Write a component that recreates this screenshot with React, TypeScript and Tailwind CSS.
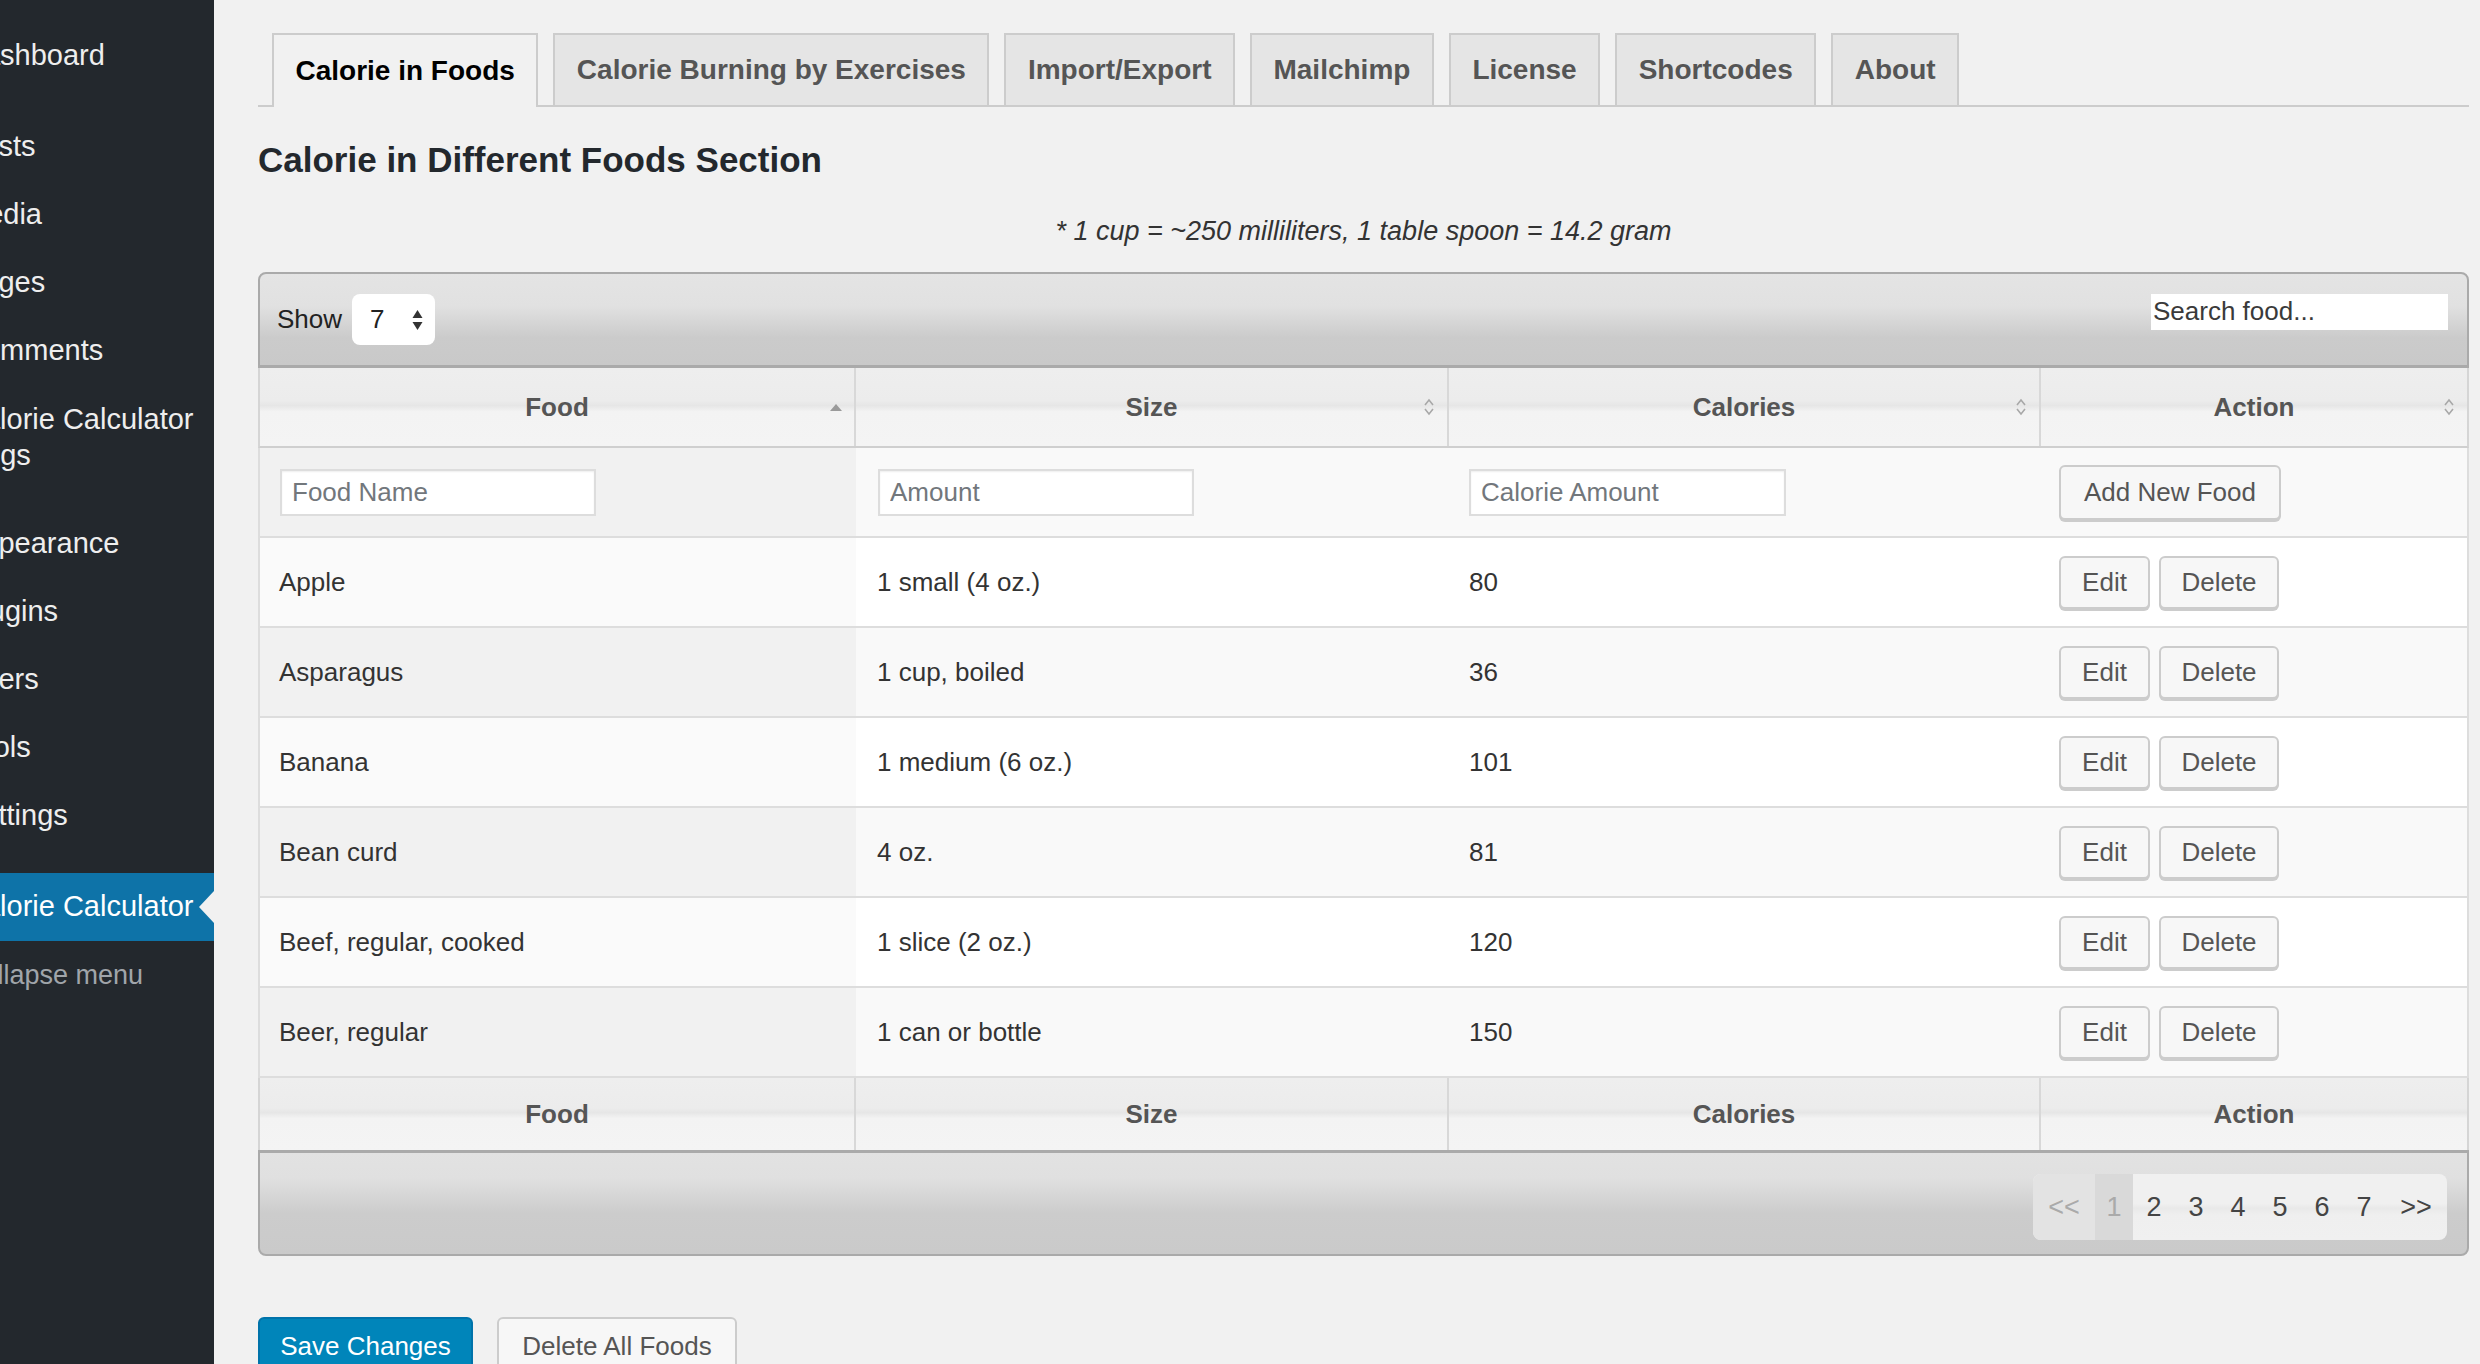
import React from "react";

type Food = {food: string; size: string; cal: string};

const foods: Food[] = [
  {food: "Apple", size: "1 small (4 oz.)", cal: "80"},
  {food: "Asparagus", size: "1 cup, boiled", cal: "36"},
  {food: "Banana", size: "1 medium (6 oz.)", cal: "101"},
  {food: "Bean curd", size: "4 oz.", cal: "81"},
  {food: "Beef, regular, cooked", size: "1 slice (2 oz.)", cal: "120"},
  {food: "Beer, regular", size: "1 can or bottle", cal: "150"},
];

const tabs = [
  "Calorie in Foods",
  "Calorie Burning by Exercises",
  "Import/Export",
  "Mailchimp",
  "License",
  "Shortcodes",
  "About",
];

const cols = "grid grid-cols-[596px_593px_592px_1fr]";

const SortBoth = () => (
  <svg width="12" height="20" viewBox="0 0 12 20" className="absolute right-[12px] top-1/2 -translate-y-1/2">
    <path d="M2 8 L6 3 L10 8" fill="none" stroke="#a8a8a8" strokeWidth="1.6" />
    <path d="M2 12 L6 17 L10 12" fill="none" stroke="#a8a8a8" strokeWidth="1.6" />
  </svg>
);

const SortUp = () => (
  <svg width="12" height="8" viewBox="0 0 12 8" className="absolute right-[12px] top-1/2 -translate-y-1/2">
    <path d="M0 8 L6 1 L12 8 Z" fill="#9a9a9a" />
  </svg>
);

const WpButton: React.FC<{children: React.ReactNode; className?: string}> = ({children, className}) => (
  <button
    className={`flex items-center justify-center rounded-[6px] border-2 border-[#ccc] bg-[#f7f7f7] text-[26px] text-[#555] shadow-[0_2px_0_#ccc] ${className ?? ""}`}
  >
    {children}
  </button>
);

const HeaderRow: React.FC<{sort?: boolean; h: string}> = ({sort, h}) => (
  <div
    className={`${cols} ${h} border-x-2 border-[#d5d5d5] bg-[linear-gradient(to_bottom,#eeeeee_0%,#ececec_42%,#e6e6e6_48%,#f3f3f3_56%,#f4f4f4_100%)] text-[26px] font-bold text-[#555]`}
  >
    {["Food", "Size", "Calories", "Action"].map((c, i) => (
      <div
        key={c}
        className={`relative flex items-center justify-center ${i < 3 ? "border-r-2 border-[#d8d8d8]" : ""}`}
      >
        {c}
        {sort && (i === 0 ? <SortUp /> : <SortBoth />)}
      </div>
    ))}
  </div>
);

const App: React.FC = () => {
  return (
    <div className="flex min-h-[1364px] bg-[#f1f1f1] font-['Liberation_Sans',Arial,sans-serif] text-[#333]">
      {/* admin menu, cropped on the left */}
      <aside className="w-[214px] shrink-0 overflow-hidden bg-[#23282d]">
        <ul className="-ml-[37px] pt-[22px] text-[29px] text-[#eee]">
          <li className="flex h-[68px] items-center whitespace-nowrap">Dashboard</li>
          <li className="h-[23px]" />
          <li className="flex h-[68px] items-center whitespace-nowrap">Posts</li>
          <li className="flex h-[68px] items-center whitespace-nowrap">Media</li>
          <li className="flex h-[68px] items-center whitespace-nowrap">Pages</li>
          <li className="flex h-[68px] items-center whitespace-nowrap">Comments</li>
          <li className="flex h-[104px] flex-col justify-center whitespace-nowrap leading-[36px]">
            <span>Calorie Calculator</span>
            <span className="-ml-[37px]">Settings</span>
          </li>
          <li className="h-[21px]" />
          <li className="flex h-[68px] items-center whitespace-nowrap">Appearance</li>
          <li className="flex h-[68px] items-center whitespace-nowrap">Plugins</li>
          <li className="flex h-[68px] items-center whitespace-nowrap">Users</li>
          <li className="flex h-[68px] items-center whitespace-nowrap">Tools</li>
          <li className="flex h-[68px] items-center whitespace-nowrap">Settings</li>
          <li className="h-[23px]" />
          <li className="relative flex h-[68px] items-center whitespace-nowrap bg-[#0e73a8] text-white">
            Calorie Calculator
            <span className="absolute right-0 top-1/2 -translate-y-1/2 border-y-[16px] border-r-[15px] border-y-transparent border-r-[#f1f1f1]" />
          </li>
          <li className="flex h-[68px] items-center whitespace-nowrap text-[27px] text-[#a0a5aa]">Collapse menu</li>
        </ul>
      </aside>

      <main className="flex-1 pl-[44px] pr-[11px] pt-[35px]">
        {/* tabs */}
        <div className="flex h-[72px] items-end gap-[15px] border-b-2 border-[#ccc] pl-[14px]">
          {tabs.map((t, i) => (
            <div
              key={t}
              className={`flex h-[72px] items-center border-2 border-b-0 border-[#ccc] px-[21.5px] text-[28px] font-bold ${
                i === 0 ? "-mb-[2px] h-[74px] bg-[#f1f1f1] text-black" : "bg-[#e5e5e5] text-[#555]"
              }`}
            >
              {t}
            </div>
          ))}
        </div>

        <h2 className="mt-[33px] text-[35px] font-bold leading-[40px] text-[#23282d]">
          Calorie in Different Foods Section
        </h2>
        <p className="mt-[35px] text-center text-[27px] italic leading-[32px] text-[#333]">
          * 1 cup = ~250 milliliters, 1 table spoon = 14.2 gram
        </p>

        {/* table */}
        <div className="mt-[25px]">
          <div className="flex h-[96px] items-center justify-between rounded-t-[8px] border-2 border-b-[3px] border-[#aaa] bg-[linear-gradient(to_bottom,#e4e4e4_0%,#e1e1e1_35%,#cbcbcb_70%,#c9c9c9_100%)] pl-[17px] pr-[19px]">
            <div className="flex items-center gap-[10px] text-[26px] text-[#222]">
              <span>Show</span>
              <div className="flex h-[51px] w-[83px] items-center justify-between rounded-[8px] bg-white pl-[18px] pr-[12px]">
                <span>7</span>
                <svg width="11" height="22" viewBox="0 0 11 22">
                  <path d="M0.5 9 L5.5 1 L10.5 9 Z" fill="#333" />
                  <path d="M0.5 13 L5.5 21 L10.5 13 Z" fill="#333" />
                </svg>
              </div>
            </div>
            <input
              placeholder="Search food..."
              className="mb-[16px] h-[36px] w-[297px] bg-white px-[2px] text-[26px] text-[#333] outline-none placeholder:text-[#3a3a3a]"
            />
          </div>

          <HeaderRow sort h="h-[80px] border-b-2 border-b-[#cfcfcf]" />

          {/* new food row */}
          <div className={`${cols} h-[90px] border-x-2 border-b-2 border-[#ddd] text-[26px]`}>
            <div className="flex items-center bg-[#f1f1f1] pl-[20px]">
              <input
                placeholder="Food Name"
                className="h-[47px] w-[316px] border-2 border-[#ddd] bg-white px-[10px] shadow-[inset_0_1px_2px_rgba(0,0,0,0.07)] outline-none placeholder:text-[#72777c]"
              />
            </div>
            <div className="flex items-center bg-[#f9f9f9] pl-[22px]">
              <input
                placeholder="Amount"
                className="h-[47px] w-[316px] border-2 border-[#ddd] bg-white px-[10px] shadow-[inset_0_1px_2px_rgba(0,0,0,0.07)] outline-none placeholder:text-[#72777c]"
              />
            </div>
            <div className="flex items-center bg-[#f9f9f9] pl-[20px]">
              <input
                placeholder="Calorie Amount"
                className="h-[47px] w-[317px] border-2 border-[#ddd] bg-white px-[10px] shadow-[inset_0_1px_2px_rgba(0,0,0,0.07)] outline-none placeholder:text-[#72777c]"
              />
            </div>
            <div className="flex items-center bg-[#f9f9f9] pl-[18px]">
              <WpButton className="h-[55px] w-[222px]">Add New Food</WpButton>
            </div>
          </div>

          {foods.map((f, i) => {
            const odd = i % 2 === 0;
            return (
              <div
                key={f.food}
                className={`${cols} h-[90px] border-x-2 border-b-2 border-[#ddd] text-[26px] text-[#333]`}
              >
                <div className={`flex items-center pl-[19px] ${odd ? "bg-[#fafafa]" : "bg-[#f1f1f1]"}`}>{f.food}</div>
                <div className={`flex items-center pl-[21px] ${odd ? "bg-white" : "bg-[#f9f9f9]"}`}>{f.size}</div>
                <div className={`flex items-center pl-[20px] ${odd ? "bg-white" : "bg-[#f9f9f9]"}`}>{f.cal}</div>
                <div className={`flex items-center gap-[9px] pl-[18px] ${odd ? "bg-white" : "bg-[#f9f9f9]"}`}>
                  <WpButton className="h-[53px] w-[91px]">Edit</WpButton>
                  <WpButton className="h-[53px] w-[120px]">Delete</WpButton>
                </div>
              </div>
            );
          })}

          <HeaderRow h="h-[72px]" />

          <div className="flex h-[106px] items-start justify-end rounded-b-[8px] border-2 border-t-[3px] border-[#aaa] bg-[linear-gradient(to_bottom,#e2e2e2_0%,#e0e0e0_25%,#cccccc_60%,#cacaca_100%)] pr-[20px] pt-[21px]">
            <div className="flex h-[66px] overflow-hidden rounded-[8px] bg-[linear-gradient(to_bottom,#f0f0f0_0%,#f0f0f0_45%,#e9e9e9_52%,#efefef_62%,#f0f0f0_100%)] text-[27px]">
              <span className="flex w-[62px] items-center justify-center bg-[#e3e3e3] text-[#aaa]">&lt;&lt;</span>
              <span className="flex w-[38px] items-center justify-center bg-[#d9d9d9] text-[#aaa]">1</span>
              {["2", "3", "4", "5", "6", "7"].map((n) => (
                <span key={n} className="flex w-[42px] items-center justify-center text-[#444]">
                  {n}
                </span>
              ))}
              <span className="flex w-[62px] items-center justify-center text-[#444]">&gt;&gt;</span>
            </div>
          </div>
        </div>

        <div className="mt-[61px] flex gap-[24px]">
          <button className="h-[62px] w-[215px] rounded-[6px] border-2 border-[#0073aa] bg-[#0085ba] pb-[4px] text-[26px] text-white shadow-[0_2px_0_#006799]">
            Save Changes
          </button>
          <WpButton className="h-[62px] w-[240px] pb-[4px]">Delete All Foods</WpButton>
        </div>
      </main>
    </div>
  );
};

export default App;
